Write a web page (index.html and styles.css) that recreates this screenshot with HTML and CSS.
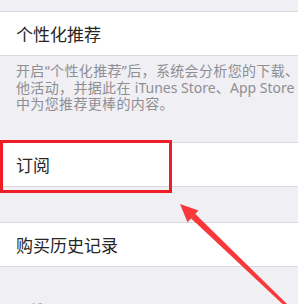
FILE: index.html
```html
<!DOCTYPE html>
<html lang="zh-CN">
<head>
    <meta charset="UTF-8">
    <meta name="viewport" content="width=device-width, initial-scale=1.0">
    <title>个性化推荐</title>
    <link rel="stylesheet" href="styles.css">
</head>
<body>
    <div class="page">
        <div class="gap-top"></div>

        <!-- 个性化推荐 -->
        <div class="cell">个性化推荐</div>
        <div class="note">
            <p>开启“个性化推荐”后，系统会分析您的下载、购买和其</p>
            <p>他活动，并据此在 <span class="latin">iTunes Store</span>、<span class="latin">App Store</span> 和 Apple Books</p>
            <p>中为您推荐更棒的内容。</p>
        </div>

        <!-- 订阅 -->
        <div class="cell">订阅</div>
        <div class="gap"></div>

        <!-- 购买历史记录 -->
        <div class="cell">购买历史记录</div>
        <div class="section-title">更新</div>

        <!-- 标注 -->
        <div class="mark"></div>
        <svg class="arrow" width="298" height="304" viewBox="0 0 298 304">
            <polygon points="180,204 198.5,210.6 187.5,222.2" fill="#f8383a"/>
            <polygon points="195.1,213.8 291,307.9 289,310.1 190.9,218.2" fill="#f8383a"/>
        </svg>
    </div>
</body>
</html>
```

FILE: styles.css
```css
body {
    margin: 0;
    padding: 0;
    background: #efeff4;
    font-family: "Noto Sans", "Noto Sans CJK SC", sans-serif;
}
.page {
    position: relative;
    width: 298px;
    height: 304px;
    overflow: hidden;
}
.gap-top {
    height: 11px;
}
.cell {
    display: flex;
    align-items: center;
    height: 43px;
    padding-left: 16px;
    background: white;
    border-top: 1px solid #d9d9de;
    border-bottom: 1px solid #d9d9de;
    font-family: "Noto Sans CJK SC", sans-serif;
    font-size: 17px;
    line-height: 20px;
    color: #262626;
}
.note {
    height: 86px;
    padding: 7px 0 0 16px;
    box-sizing: border-box;
    font-size: 14px;
    line-height: 16.5px;
    letter-spacing: 0.35px;
    color: #8e8e93;
    white-space: nowrap;
}
.note p {
    margin: 0;
}
.latin {
    letter-spacing: 0;
}
.gap {
    height: 35px;
}
.section-title {
    padding: 32px 0 0 17px;
    font-family: "Noto Sans CJK SC", sans-serif;
    font-size: 13px;
    color: #8e8e93;
}
.mark {
    position: absolute;
    left: 0;
    top: 140px;
    width: 166px;
    height: 47px;
    border: 3px solid #ee1d27;
}
.arrow {
    position: absolute;
    left: 0;
    top: 0;
}
```
